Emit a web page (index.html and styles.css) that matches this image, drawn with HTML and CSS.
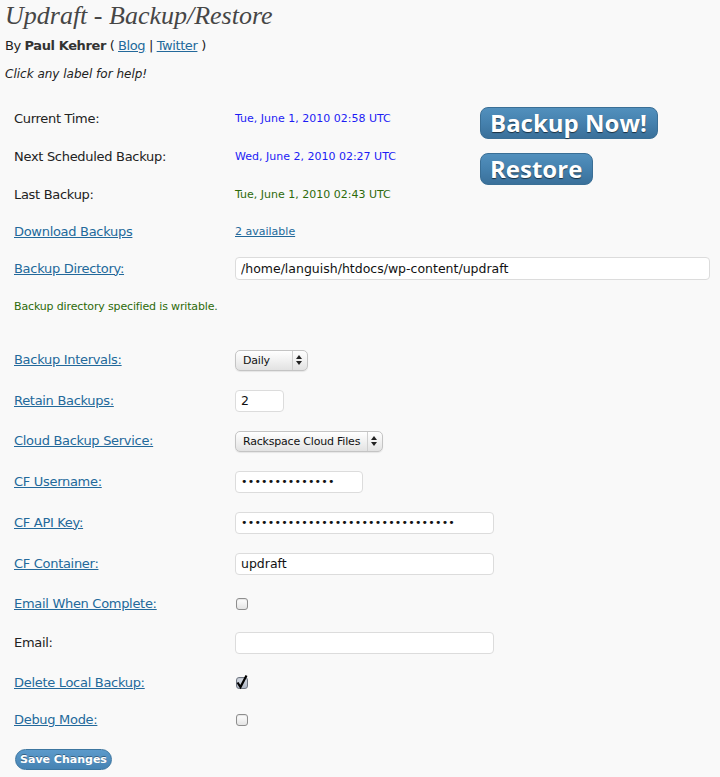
FILE: index.html
```html
<!DOCTYPE html>
<html>
<head>
<meta charset="utf-8">
<title>Updraft - Backup/Restore</title>
<link rel="stylesheet" href="styles.css">
</head>
<body>
<div class="wrap">
  <h2 class="title">Updraft - Backup/Restore</h2>
  <p class="byline">By <strong>Paul Kehrer</strong> ( <a href="#">Blog</a> | <a href="#">Twitter</a> )</p>
  <p class="hint">Click any label for help!</p>

  <form class="form">
    <div class="top">
      <div class="top-rows">
        <div class="row h38"><span class="label">Current Time:</span><span class="value blue">Tue, June 1, 2010 02:58 UTC</span></div>
        <div class="row h38"><span class="label">Next Scheduled Backup:</span><span class="value blue">Wed, June 2, 2010 02:27 UTC</span></div>
        <div class="row h38"><span class="label">Last Backup:</span><span class="value green">Tue, June 1, 2010 02:43 UTC</span></div>
      </div>
      <div class="actions">
        <button type="button" class="big-btn">Backup Now!</button>
        <button type="button" class="big-btn">Restore</button>
      </div>
    </div>

    <div class="row h36"><a href="#" class="label">Download Backups</a><a href="#" class="value">2 available</a></div>
    <div class="row h37"><a href="#" class="label">Backup Directory:</a><input class="field w-dir" type="text" value="/home/languish/htdocs/wp-content/updraft"></div>
    <div class="row h40"><span class="note">Backup directory specified is writable.</span></div>

    <div class="section">
      <div class="row h40"><a href="#" class="label">Backup Intervals:</a>
        <span class="select w-daily"><select><option>Daily</option></select>
          <svg class="arrows" width="6" height="10" viewBox="0 0 6 10"><path d="M0 4 L3 0 L6 4 Z M0 6 L3 10 L6 6 Z" fill="#222"/></svg>
        </span>
      </div>
      <div class="row h41"><a href="#" class="label">Retain Backups:</a><input class="field w-retain" type="text" value="2"></div>
      <div class="row h40"><a href="#" class="label">Cloud Backup Service:</a>
        <span class="select w-cloud"><select><option>Rackspace Cloud Files</option></select>
          <svg class="arrows" width="6" height="10" viewBox="0 0 6 10"><path d="M0 4 L3 0 L6 4 Z M0 6 L3 10 L6 6 Z" fill="#222"/></svg>
        </span>
      </div>
      <div class="row h41"><a href="#" class="label">CF Username:</a><input class="field w-user" type="password" value="abcdefghijklmn"></div>
      <div class="row h41"><a href="#" class="label">CF API Key:</a><input class="field w-wide" type="password" value="abcdefghijklmnopqrstuvwxyz123456"></div>
      <div class="row h41"><a href="#" class="label">CF Container:</a><input class="field w-wide" type="text" value="updraft"></div>
      <div class="row h40"><a href="#" class="label">Email When Complete:</a><span class="check"><input type="checkbox"></span></div>
      <div class="row h38"><span class="label">Email:</span><input class="field w-wide" type="text" value=""></div>
      <div class="row h41"><a href="#" class="label">Delete Local Backup:</a>
        <span class="check"><input type="checkbox" checked>
          <svg class="tick" width="14" height="16" viewBox="0 0 14 16"><path d="M2.5 8.5 L5.5 13 L11.5 1.5" fill="none" stroke="#000" stroke-width="2.2" stroke-linejoin="miter" stroke-linecap="butt"/></svg>
        </span>
      </div>
      <div class="row h34"><a href="#" class="label">Debug Mode:</a><span class="check"><input type="checkbox"></span></div>
    </div>

    <div class="submit">
      <button type="button" class="save-btn">Save Changes</button>
    </div>
  </form>
</div>
</body>
</html>
```

FILE: styles.css
```css
html, body {
  margin: 0;
  padding: 0;
  background: #f9f9f9;
}

body {
  font-family: "DejaVu Sans", Verdana, sans-serif;
  color: #222;
}

.wrap {
  padding: 1px 10px 0 5px;
}

.title {
  margin: 0;
  font-family: "Liberation Serif", "Times New Roman", serif;
  font-style: italic;
  font-weight: normal;
  font-size: 26px;
  line-height: 30px;
  color: #464646;
}

.byline {
  margin: 7px 0 0;
  font-size: 13px;
  line-height: 16px;
  letter-spacing: -0.4px;
  color: #222;
}

.byline strong {
  font-weight: bold;
  color: #333;
}

a {
  color: #23699b;
  text-decoration: underline;
}

.hint {
  margin: 11.5px 0 0;
  font-size: 12px;
  line-height: 16px;
  font-style: italic;
  color: #222;
}

.form {
  margin: 18.5px 0 0;
  padding-left: 9px;
}

.top {
  display: flex;
}

.top-rows {
  width: 466px;
}

.actions {
  display: flex;
  flex-direction: column;
  align-items: flex-start;
  gap: 14px;
  padding-top: 6.5px;
}

.row {
  display: flex;
  align-items: center;
}

.h34 { height: 34px; }
.h36 { height: 36px; }
.h37 { height: 37px; }
.h38 { height: 38px; }
.h40 { height: 40px; }
.h41 { height: 41px; }

.label {
  width: 221px;
  flex: none;
  font-size: 13px;
  line-height: 16px;
  letter-spacing: -0.3px;
  color: #222;
}

a.label {
  color: #23699b;
}

.value {
  font-size: 11px;
  line-height: 14px;
}

.blue { color: #1c1cf5; }
.green { color: #2d6a0a; }

.note {
  font-size: 11px;
  line-height: 14px;
  letter-spacing: -0.15px;
  color: #2d6a0a;
}

.section {
  margin-top: 13px;
}

.field {
  box-sizing: border-box;
  height: 22px;
  margin: 0;
  padding: 0 5px;
  border: 1px solid #dcdcdc;
  border-radius: 4px;
  background: #fff;
  font-family: "DejaVu Sans", Verdana, sans-serif;
  font-size: 12.5px;
  color: #111;
  outline: none;
}

.field[type="password"] {
  font-size: 11px;
  letter-spacing: 0.2px;
}

.w-dir { width: 475px; height: 23px; }
.w-retain { width: 49px; }
.w-user { width: 128px; }
.w-wide { width: 259px; }

.select {
  position: relative;
  box-sizing: border-box;
  display: inline-flex;
  height: 21px;
  border: 1px solid #c4c4c4;
  border-radius: 5px;
  background: linear-gradient(#ffffff, #f1f1f1 50%, #e2e2e2);
  box-shadow: 0 1px 1px rgba(0,0,0,0.08);
}

.select select {
  appearance: none;
  -webkit-appearance: none;
  border: 0;
  background: transparent;
  margin: 0;
  padding: 0 0 0 7px;
  height: 19px;
  font-family: "DejaVu Sans", Verdana, sans-serif;
  font-size: 11px;
  letter-spacing: -0.2px;
  color: #111;
  outline: none;
  width: 100%;
  border-right: 1px solid #cfcfcf;
  box-sizing: border-box;
}

.w-daily { width: 73px; }
.w-daily select { width: 57px; }
.w-cloud { width: 148px; }
.w-cloud select { width: 132px; }

.select .arrows {
  position: absolute;
  right: 5px;
  top: 4.5px;
  pointer-events: none;
}

.check {
  position: relative;
  display: inline-flex;
}

.check input {
  appearance: none;
  -webkit-appearance: none;
  box-sizing: border-box;
  width: 12px;
  height: 12px;
  margin: 0 0 0 1px;
  border: 1px solid #8e8e8e;
  border-radius: 3px;
  background: linear-gradient(#ffffff, #e4e4e4);
  box-shadow: inset 0 1px 1px rgba(0,0,0,0.1);
}

.check input:checked {
  background: linear-gradient(#d8dde6, #aeb6c4);
  border-color: #6f7682;
}

.check .tick {
  position: absolute;
  left: 0;
  top: -3px;
  pointer-events: none;
}

.big-btn {
  box-sizing: border-box;
  height: 32px;
  padding: 0 10px 0 9px;
  border: 1px solid #3a6f96;
  border-radius: 8px;
  background: linear-gradient(#5290bd, #4581ae 50%, #3a709a);
  font-family: "Open Sans", "DejaVu Sans", sans-serif;
  font-weight: bold;
  font-size: 24px;
  line-height: 28px;
  color: #fff;
  text-shadow: 0 1px 1px rgba(0,0,0,0.6);
  cursor: pointer;
}

.submit {
  padding: 11px 0 0 1px;
}

.save-btn {
  box-sizing: border-box;
  width: 97px;
  height: 21px;
  padding: 0;
  border: 1px solid #3d76a0;
  border-radius: 11px;
  background: linear-gradient(#5c9acb, #4683b3);
  font-family: "DejaVu Sans", Verdana, sans-serif;
  font-weight: bold;
  font-size: 11px;
  color: #fff;
  text-shadow: 0 -1px 0 rgba(0,0,0,0.35);
  cursor: pointer;
}
```
